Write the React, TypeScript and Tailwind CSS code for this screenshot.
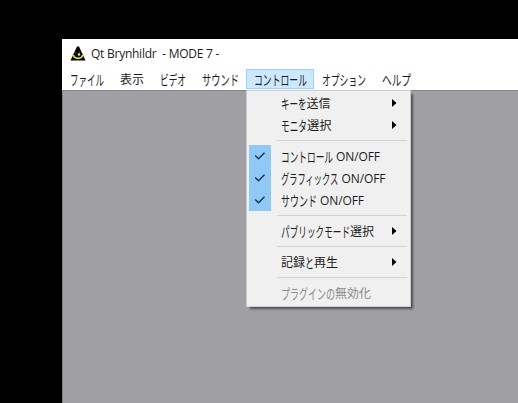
type Part = { text: string; width: number; kind: "kana" | "kanji" | "latin" };

const kana = (text: string, width: number): Part => ({ text, width, kind: "kana" });
const kanji = (text: string, width: number): Part => ({ text, width, kind: "kanji" });
const latin = (text: string, width: number): Part => ({ text, width, kind: "latin" });

/* Text runs with tall, condensed kana, as in the Windows UI font. */
function Label({ parts }: { parts: Part[] }) {
  return (
    <span className="flex whitespace-pre">
      {parts.map((part) =>
        part.kind === "latin" ? (
          <span
            key={part.text}
            className="pt-px font-['Open_Sans',sans-serif] text-[12px] tracking-[-0.1px]"
            style={{ width: part.width }}
          >
            {part.text}
          </span>
        ) : (
          <span key={part.text} style={{ width: part.width }}>
            <span
              className="inline-block origin-left"
              style={{
                transform: `scale(${part.width / (part.text.length * 12)}, ${part.kind === "kana" ? 1.18 : 1})`,
              }}
            >
              {part.text}
            </span>
          </span>
        ),
      )}
    </span>
  );
}

function Row({ parts, arrow, checked, disabled }: { parts: Part[]; arrow?: boolean; checked?: boolean; disabled?: boolean }) {
  return (
    <div className={`flex h-[22px] items-center ${disabled ? "text-[#8a8a8a]" : "text-[#1c1c1c]"}`}>
      <div className={`mr-[10px] ml-[2px] flex h-full w-[22px] items-center justify-center ${checked ? "bg-[#90c8f6]" : ""}`}>
        {checked && (
          <svg width="12" height="10" viewBox="0 0 12 10" className="mb-px" fill="none" stroke="#173650" strokeWidth="1.5">
            <path d="M1.2 4.5 4.5 7.8 10.5 1.8" />
          </svg>
        )}
      </div>
      <Label parts={parts} />
      {arrow && (
        <svg width="5" height="8" viewBox="0 0 5 8" className="mr-[13px] mb-px ml-auto">
          <path d="M0 0 4.5 4 0 8Z" fill="#000" />
        </svg>
      )}
    </div>
  );
}

function Separator() {
  return (
    <div className="flex h-[9px] items-center pr-[3px] pl-[30px]">
      <div className="h-px w-full bg-[#d2d2d2]" />
    </div>
  );
}

function ControlMenu() {
  return (
    <div className="absolute top-[20px] -left-px h-[217px] w-[165px] border border-[#cccccc] bg-[#f0f0f0] pt-px shadow-[3px_3px_2px_-1px_rgba(0,0,0,0.5)]">
      <Row parts={[kana("キーを", 25.5), kanji("送信", 24)]} arrow />
      <Row parts={[kana("モニタ", 26), kanji("選択", 24.5)]} arrow />
      <Separator />
      <Row parts={[kana("コントロール", 52), latin(" ON/OFF", 48)]} checked />
      <Row parts={[kana("グラフィックス", 57.5), latin(" ON/OFF", 48)]} checked />
      <Row parts={[kana("サウンド", 36), latin(" ON/OFF", 48)]} checked />
      <Separator />
      <Row parts={[kana("パブリックモード", 69), kanji("選択", 24)]} arrow />
      <Separator />
      <Row parts={[kanji("記録", 24), kana("と", 9), kanji("再生", 24)]} arrow />
      <Separator />
      <Row parts={[kana("プラグインの", 54), kanji("無効化", 36)]} disabled />
    </div>
  );
}

const menus = [
  { label: kana("ファイル", 34), box: 50 },
  { label: kanji("表示", 24), box: 40 },
  { label: kana("ビデオ", 26), box: 42 },
  { label: kana("サウンド", 37), box: 52 },
  { label: kana("コントロール", 53), box: 68 },
  { label: kana("オプション", 44), box: 60 },
  { label: kana("ヘルプ", 29), box: 45 },
];

function AppIcon() {
  return (
    <svg width="16" height="16" viewBox="0 0 16 16">
      <path d="M7 0.5h2L15.5 14.5H.5Z" fill="#000" />
      <path d="M3.5 9Q3.7 12.3 8 12.3T12.5 9" fill="none" stroke="#e5e52c" strokeWidth="1.7" />
      <path d="M5.3 7.5 6.5 6.3M9 5.8 10.3 7" fill="none" stroke="#92922d" strokeWidth=".8" />
      <circle cx="9" cy="8.5" r="1.2" fill="#f2f26b" />
    </svg>
  );
}

export default function App() {
  return (
    <div className="flex h-[403px] w-[518px] overflow-hidden bg-black pt-[39px] pl-[62px] font-['Noto_Sans_CJK_JP',sans-serif] text-[12px] leading-[20px] text-[#1c1c1c]">
      <div className="flex min-w-0 flex-1 flex-col bg-white">
        <header className="flex h-[30px] items-center gap-[5px] pl-[8px]">
          <AppIcon />
          <h1 className="font-['Open_Sans',sans-serif] text-[12px] font-normal tracking-[-0.25px] whitespace-pre">
            Qt Brynhildr  - MODE 7 -
          </h1>
        </header>
        <nav className="flex h-[21px]">
          {menus.map(({ label, box }) => {
            const active = label.text === "コントロール";
            return (
              <div
                key={label.text}
                className={`relative flex h-[20px] items-center ${active ? "border border-[#99d1ff] bg-[#cce8ff] pl-[7px]" : "pl-[8px]"}`}
                style={{ width: box }}
              >
                <Label parts={[label]} />
                {active && <ControlMenu />}
              </div>
            );
          })}
        </nav>
        <main className="flex-1 border-t border-l border-[#85838a] bg-[#a09fa4]" />
      </div>
    </div>
  );
}
